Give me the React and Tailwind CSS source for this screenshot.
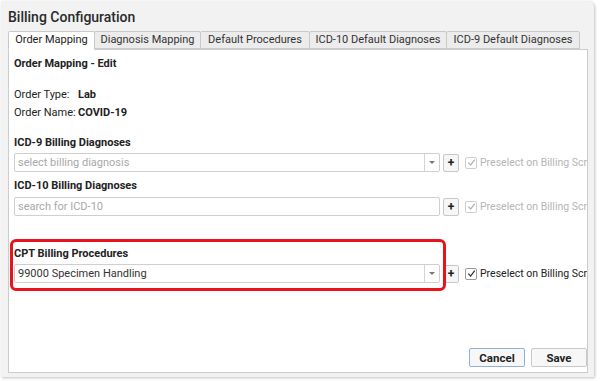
import React from "react";

const font = { fontFamily: "Roboto, 'Liberation Sans', sans-serif" };

function Arrow() {
  return (
    <div className="w-[15px] h-full border-l border-[#d4d4d4] flex items-center justify-center">
      <div className="w-0 h-0 border-l-[3px] border-r-[3px] border-t-[3px] border-l-transparent border-r-transparent border-t-[#777]" />
    </div>
  );
}

function Plus() {
  return (
    <div className="shrink-0 w-[16px] h-[18px] border border-[#c8c8c8] rounded-[2px] bg-[#f6f6f6] flex items-center justify-center text-[12px] font-bold text-[#222] leading-none ml-[3px]">
      +
    </div>
  );
}

function Check({ disabled }) {
  return (
    <div className={`shrink-0 flex items-center ml-[6px] whitespace-nowrap ${disabled ? "text-[#b5b5b5]" : "text-[#222]"}`}>
      <div className={`w-[12px] h-[12px] border rounded-[2px] flex items-center justify-center bg-white ${disabled ? "border-[#cfcfcf]" : "border-[#9a9a9a]"}`}>
        <svg width="9" height="9" viewBox="0 0 10 10">
          <path d="M1.5 5.2 L4 7.8 L8.6 1.8" fill="none" stroke={disabled ? "#b0b0b0" : "#333"} strokeWidth="1.4" />
        </svg>
      </div>
      <span className="ml-[3px] text-[10.5px]">Preselect on Billing Scr</span>
    </div>
  );
}

function Field({ text, placeholder, arrow }) {
  return (
    <div className="shrink-0 w-[426px] h-[19px] border border-[#cfcfcf] rounded-[2px] bg-white flex items-center">
      <div className={`flex-1 pl-[3px] text-[11px] truncate ${placeholder ? "text-[#a8a8a8]" : "text-[#333]"}`}>{text}</div>
      {arrow && <Arrow />}
    </div>
  );
}

function Row({ text, placeholder, arrow, disabled }) {
  return (
    <div className="flex items-center">
      <Field text={text} placeholder={placeholder} arrow={arrow} />
      <Plus />
      <Check disabled={disabled} />
    </div>
  );
}

export default function App() {
  const tabs = [
    ["Order Mapping", "w-[87px]"],
    ["Diagnosis Mapping", "w-[107px]"],
    ["Default Procedures", "w-[110px]"],
    ["ICD-10 Default Diagnoses", "w-[138px]"],
    ["ICD-9 Default Diagnoses", "w-[134px]"],
  ];
  return (
    <div className="w-[600px] h-[381px] bg-white overflow-hidden" style={font}>
      <div className="ml-[1px] mt-[1px] w-[593px] h-[376px] bg-[#f2f2f2] rounded-tr-[6px] shadow-[1px_1px_3px_rgba(0,0,0,0.25)] pl-[7px] pr-[6px] flex flex-col">
        <div className="h-[30px] pt-[6px] text-[14px] font-medium text-[#2a2a2a] leading-[20px]">Billing Configuration</div>
        <div className="flex h-[18px] items-end">
          {tabs.map(([t, w], i) => (
            <div
              key={t}
              className={`${w} h-[18px] text-center text-[11px] leading-[16px] border border-[#c9c9c9] rounded-t-[2px] -mr-[1px] whitespace-nowrap ${
                i === 0 ? "bg-white border-b-white text-[#222] z-10 h-[19px] -mb-[1px]" : "bg-[#ececec] text-[#333]"
              }`}
            >
              {t}
            </div>
          ))}
        </div>
        <div className="relative flex-1 mb-[4px] bg-white border border-[#cccccc] flex flex-col pl-[5px] pt-[7px] text-[11px] text-[#222] leading-[14px] overflow-hidden">
          <div className="font-bold">Order Mapping - Edit</div>
          <div className="mt-[17px] flex"><span className="w-[64px]">Order Type:</span><span className="font-bold">Lab</span></div>
          <div className="mt-[4px] flex"><span className="w-[64px]">Order Name:</span><span className="font-bold">COVID-19</span></div>
          <div className="mt-[16px] font-bold">ICD-9 Billing Diagnoses</div>
          <div className="mt-[3px]"><Row text="select billing diagnosis" placeholder arrow disabled /></div>
          <div className="mt-[7px] font-bold">ICD-10 Billing Diagnoses</div>
          <div className="mt-[4px]"><Row text="search for ICD-10" placeholder disabled /></div>
          <div className="mt-[31px] font-bold">CPT Billing Procedures</div>
          <div className="mt-[3px]"><Row text="99000 Specimen Handling" arrow /></div>
          <div className="absolute left-[1px] top-[189px] w-[436px] h-[52px] border-[3px] border-[#e8141b] rounded-[6px] pointer-events-none" />
          <div className="mt-auto mb-[5px] flex justify-end pr-[0px] gap-[6px]">
            <div className="w-[56px] h-[19px] border border-[#8fb2d6] rounded-[2px] bg-[#f7f7f7] text-[11.5px] font-bold flex items-center justify-center text-[#222]">Cancel</div>
            <div className="w-[56px] h-[19px] border border-[#c8c8c8] rounded-[2px] bg-[#f7f7f7] text-[11.5px] font-bold flex items-center justify-center text-[#222]">Save</div>
          </div>
        </div>
      </div>
    </div>
  );
}
